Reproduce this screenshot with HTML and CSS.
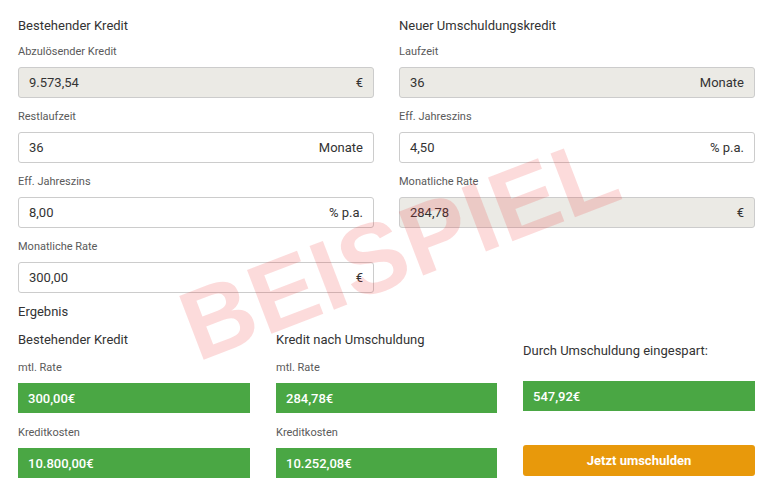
FILE: index.html
```html
<!DOCTYPE html>
<html lang="de">
<head>
<meta charset="utf-8">
<title>Umschuldungsrechner</title>
<link rel="stylesheet" href="styles.css">
</head>
<body>
<div class="calc">
  <div class="inputs">
    <div class="col">
      <h2 class="heading">Bestehender Kredit</h2>
      <div class="field">
        <div class="label">Abzulösender Kredit</div>
        <div class="box readonly"><span>9.573,54</span><span class="unit">€</span></div>
      </div>
      <div class="field">
        <div class="label">Restlaufzeit</div>
        <div class="box"><span>36</span><span class="unit">Monate</span></div>
      </div>
      <div class="field">
        <div class="label">Eff. Jahreszins</div>
        <div class="box"><span>8,00</span><span class="unit">% p.a.</span></div>
      </div>
      <div class="field">
        <div class="label">Monatliche Rate</div>
        <div class="box"><span>300,00</span><span class="unit">€</span></div>
      </div>
    </div>
    <div class="col">
      <h2 class="heading">Neuer Umschuldungskredit</h2>
      <div class="field">
        <div class="label">Laufzeit</div>
        <div class="box readonly"><span>36</span><span class="unit">Monate</span></div>
      </div>
      <div class="field">
        <div class="label">Eff. Jahreszins</div>
        <div class="box"><span>4,50</span><span class="unit">% p.a.</span></div>
      </div>
      <div class="field">
        <div class="label">Monatliche Rate</div>
        <div class="box readonly"><span>284,78</span><span class="unit">€</span></div>
      </div>
    </div>
  </div>

  <h2 class="heading result-title">Ergebnis</h2>
  <div class="results">
    <div class="rcol">
      <h3 class="heading sub">Bestehender Kredit</h3>
      <div class="label">mtl. Rate</div>
      <div class="value">300,00€</div>
      <div class="label gap">Kreditkosten</div>
      <div class="value">10.800,00€</div>
    </div>
    <div class="rcol">
      <h3 class="heading sub">Kredit nach Umschuldung</h3>
      <div class="label">mtl. Rate</div>
      <div class="value">284,78€</div>
      <div class="label gap">Kreditkosten</div>
      <div class="value">10.252,08€</div>
    </div>
    <div class="rcol saved">
      <h3 class="heading sub">Durch Umschuldung eingespart:</h3>
      <div class="value">547,92€</div>
      <button class="cta" type="button">Jetzt umschulden</button>
    </div>
  </div>

  <div class="watermark">BEISPIEL</div>
</div>
</body>
</html>
```

FILE: styles.css
```css
* { box-sizing: border-box; }

html, body {
  margin: 0;
  padding: 0;
  background: #ffffff;
}

body {
  font-family: Roboto, "Liberation Sans", Arial, sans-serif;
  color: #333333;
}

.calc {
  position: relative;
  width: 773px;
  height: 496px;
  padding: 16px 18px 0 18px;
  overflow: hidden;
}

.inputs {
  display: grid;
  grid-template-columns: 356px 356px;
  column-gap: 25px;
}

.heading {
  margin: 0;
  font-size: 13px;
  font-weight: 400;
  line-height: 20px;
  color: #333333;
}

.col .heading {
  margin-bottom: 8px;
}

.field {
  display: flex;
  flex-direction: column;
  margin-bottom: 11px;
}

.label {
  font-size: 11px;
  line-height: 16px;
  color: #5a5a5a;
  margin-bottom: 7px;
}

.box {
  display: flex;
  justify-content: space-between;
  align-items: center;
  height: 31px;
  padding: 0 10px 0 10px;
  border: 1px solid #cccccc;
  border-radius: 3px;
  background: #ffffff;
  font-size: 13px;
  color: #333333;
}

.box.readonly {
  background: #ebeae5;
}

.unit {
  color: #333333;
}

.result-title {
  margin-top: -1px;
  line-height: 18px;
}

.results {
  display: grid;
  grid-template-columns: 232px 221px 1fr;
  column-gap: 26px;
  margin-top: 10px;
}

.rcol {
  display: flex;
  flex-direction: column;
}

.sub {
  line-height: 18px;
  margin-bottom: 11px;
}

.rcol .label {
  margin-bottom: 7px;
}

.rcol .label.gap {
  margin-top: 12px;
}

.value {
  height: 30px;
  display: flex;
  align-items: center;
  padding-left: 10px;
  background: #4aa744;
  color: #ffffff;
  font-size: 13px;
  font-weight: 500;
}

.saved {
  padding-top: 11px;
}

.saved .sub {
  margin-bottom: 21px;
}

.cta {
  margin-top: 34px;
  height: 31px;
  border: none;
  border-radius: 3px;
  background: #e8990b;
  color: #ffffff;
  font-family: Roboto, "Liberation Sans", Arial, sans-serif;
  font-size: 13px;
  font-weight: 700;
  cursor: pointer;
}

.watermark {
  position: absolute;
  left: 170px;
  top: 198px;
  font-family: "Liberation Sans", Arial, sans-serif;
  font-weight: 700;
  font-size: 99px;
  line-height: 1;
  letter-spacing: 1px;
  color: rgba(238, 40, 40, 0.17);
  transform: rotate(-21deg);
  transform-origin: center center;
  pointer-events: none;
  white-space: nowrap;
}
```
